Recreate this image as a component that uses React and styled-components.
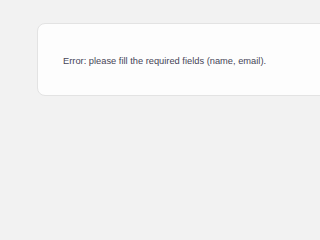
import React from "react";
import styled, { createGlobalStyle } from "styled-components";

const Global = createGlobalStyle`
  html, body {
    margin: 0;
    padding: 0;
    background: #f2f2f2;
  }
  body {
    font-family: "Liberation Sans", Arial, sans-serif;
    overflow: hidden;
  }
`;

const Page = styled.div`
  width: 100vw;
  height: 100vh;
  overflow: hidden;
  box-sizing: border-box;
  padding: 23px 0 0 37px;
`;

const Notice = styled.div`
  width: 320px;
  height: 73px;
  box-sizing: border-box;
  display: flex;
  align-items: center;
  padding: 2px 0 0 25px;
  background: #fdfdfd;
  border: 1px solid #e3e3e3;
  border-radius: 8px;
`;

const Message = styled.p`
  margin: 0;
  font-size: 9.3px;
  line-height: 12px;
  color: #464557;
  white-space: nowrap;
`;

export default function App() {
  return (
    <>
      <Global />
      <Page>
        <Notice>
          <Message>Error: please fill the required fields (name, email).</Message>
        </Notice>
      </Page>
    </>
  );
}
